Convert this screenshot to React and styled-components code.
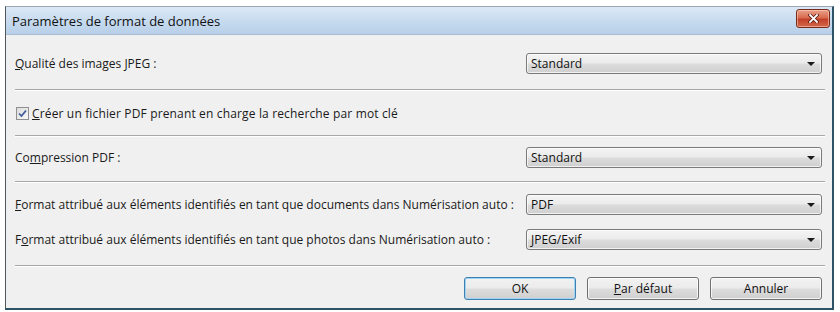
import styled, { createGlobalStyle } from 'styled-components';

const GlobalStyle = createGlobalStyle`
  html, body {
    margin: 0;
    padding: 0;
    background: #ffffff;
  }
  body {
    font-family: "Open Sans", "Noto Sans", sans-serif;
    font-size: 12px;
    color: #1a1a1a;
  }
`;

const Window = styled.div`
  margin: 6px 0 0 5px;
  width: 826px;
  height: 301px;
  border-left: 1px solid #4f565c;
  border-top: 1px solid #9aa7b3;
  border-right: 2px solid #2c5466;
  border-bottom: 2px solid #2c5466;
  display: flex;
  flex-direction: column;
  background: #f0f0f0;
  overflow: hidden;
`;

const TitleBar = styled.div`
  height: 27px;
  flex: none;
  display: flex;
  align-items: flex-start;
  justify-content: space-between;
  background: linear-gradient(#dce8f5, #c4d9ee 60%, #b7cfe8);
  border-bottom: 1px solid #aabdd1;
`;

const Title = styled.span`
  margin: 5px 0 0 6px;
  font-size: 13px;
  color: #111;
`;

const CloseButton = styled.div`
  margin: 2px 2px 0 0;
  width: 32px;
  height: 17px;
  border: 1px solid #7a2a1a;
  border-radius: 3px;
  background: linear-gradient(#eaa08a, #d86c50 45%, #c2412a 55%, #d4684a);
  display: flex;
  align-items: center;
  justify-content: center;
  box-shadow: inset 0 0 0 1px rgba(255, 220, 200, 0.5);
`;

const Body = styled.div`
  flex: 1;
  padding: 17px 10px 0 9px;
  display: flex;
  flex-direction: column;
`;

const Row = styled.div`
  margin-top: ${(p) => p.$gap || 0}px;
  height: ${(p) => p.$h || 23}px;
  display: flex;
  align-items: center;
  justify-content: ${(p) => p.$end ? 'flex-end' : 'space-between'};
  gap: ${(p) => p.$end ? '11px' : '0'};
`;

const Label = styled.span`
  white-space: nowrap;
  u { text-decoration: underline; text-underline-offset: 1px; }
`;

const Separator = styled.div`
  margin-top: ${(p) => p.$gap || 0}px;
  margin-right: -3px;
  height: 1px;
  background: #a7a7a7;
  border-bottom: 1px solid #ffffff;
`;

const Select = styled.div`
  width: 296px;
  height: 21px;
  flex: none;
  box-sizing: border-box;
  border: 1px solid #7a7a7a;
  border-radius: 3px;
  background: linear-gradient(#f4f4f4, #ebebeb 48%, #dcdcdc 52%, #cfcfcf);
  box-shadow: inset 0 0 0 1px rgba(255, 255, 255, 0.7);
  display: flex;
  align-items: center;
  justify-content: space-between;
  padding: 0 6px 0 4px;
  color: #111;
`;

const Arrow = styled.span`
  width: 0;
  height: 0;
  border-left: 4px solid transparent;
  border-right: 4px solid transparent;
  border-top: 4px solid #1a1a1a;
`;

const CheckRow = styled.label`
  display: flex;
  align-items: center;
  gap: 3px;
  padding-left: 1px;
  letter-spacing: 0.15px;
`;

const CheckBox = styled.span`
  width: 11px;
  height: 11px;
  border: 1px solid #8e8f8f;
  background: linear-gradient(135deg, #dcdcdc, #f8f8f8);
  display: flex;
  align-items: center;
  justify-content: center;
`;

const Button = styled.div`
  width: 112px;
  height: 23px;
  box-sizing: border-box;
  border: 1px solid ${(p) => p.$default ? '#3c7fb1' : '#707070'};
  border-radius: 3px;
  background: linear-gradient(#f2f2f2, #ebebeb 48%, #dddddd 52%, #cfcfcf);
  box-shadow: inset 0 0 0 1px ${(p) => p.$default ? '#9fd5f3' : 'rgba(255,255,255,0.75)'};
  display: flex;
  align-items: center;
  justify-content: center;
  color: #111;
  u { text-decoration: underline; text-underline-offset: 1px; }
`;

export default function App() {
  return (
    <>
      <GlobalStyle />
      <Window>
        <TitleBar>
          <Title>Paramètres de format de données</Title>
          <CloseButton>
            <svg width="11" height="9" viewBox="0 0 11 9">
              <path d="M2 1 L9 8 M9 1 L2 8" stroke="#5a1a10" strokeWidth="3.4" strokeLinecap="square" />
              <path d="M2 1 L9 8 M9 1 L2 8" stroke="#ffffff" strokeWidth="1.8" strokeLinecap="square" />
            </svg>
          </CloseButton>
        </TitleBar>
        <Body>
          <Row>
            <Label><u>Q</u>ualité des images JPEG :</Label>
            <Select>Standard<Arrow /></Select>
          </Row>
          <Separator $gap={14} />
          <Row $gap={13} $h={18}>
            <CheckRow>
              <CheckBox>
                <svg width="9" height="9" viewBox="0 0 9 9">
                  <path d="M1 4.5 L3.5 7 L8 1.5" fill="none" stroke="#3e5a9a" strokeWidth="1.7" />
                </svg>
              </CheckBox>
              <Label><u>C</u>réer un fichier PDF prenant en charge la recherche par mot clé</Label>
            </CheckRow>
          </Row>
          <Separator $gap={13} />
          <Row $gap={9}>
            <Label>Co<u>m</u>pression PDF :</Label>
            <Select>Standard<Arrow /></Select>
          </Row>
          <Separator $gap={12} />
          <Row $gap={10}>
            <Label><u>F</u>ormat attribué aux éléments identifiés en tant que documents dans Numérisation auto :</Label>
            <Select>PDF<Arrow /></Select>
          </Row>
          <Row $gap={12}>
            <Label>F<u>o</u>rmat attribué aux éléments identifiés en tant que photos dans Numérisation auto :</Label>
            <Select>JPEG/Exif<Arrow /></Select>
          </Row>
          <Separator $gap={14} />
          <Row $gap={10} $end>
            <Button $default>OK</Button>
            <Button><u>P</u>ar défaut</Button>
            <Button>Annuler</Button>
          </Row>
        </Body>
      </Window>
    </>
  );
}
